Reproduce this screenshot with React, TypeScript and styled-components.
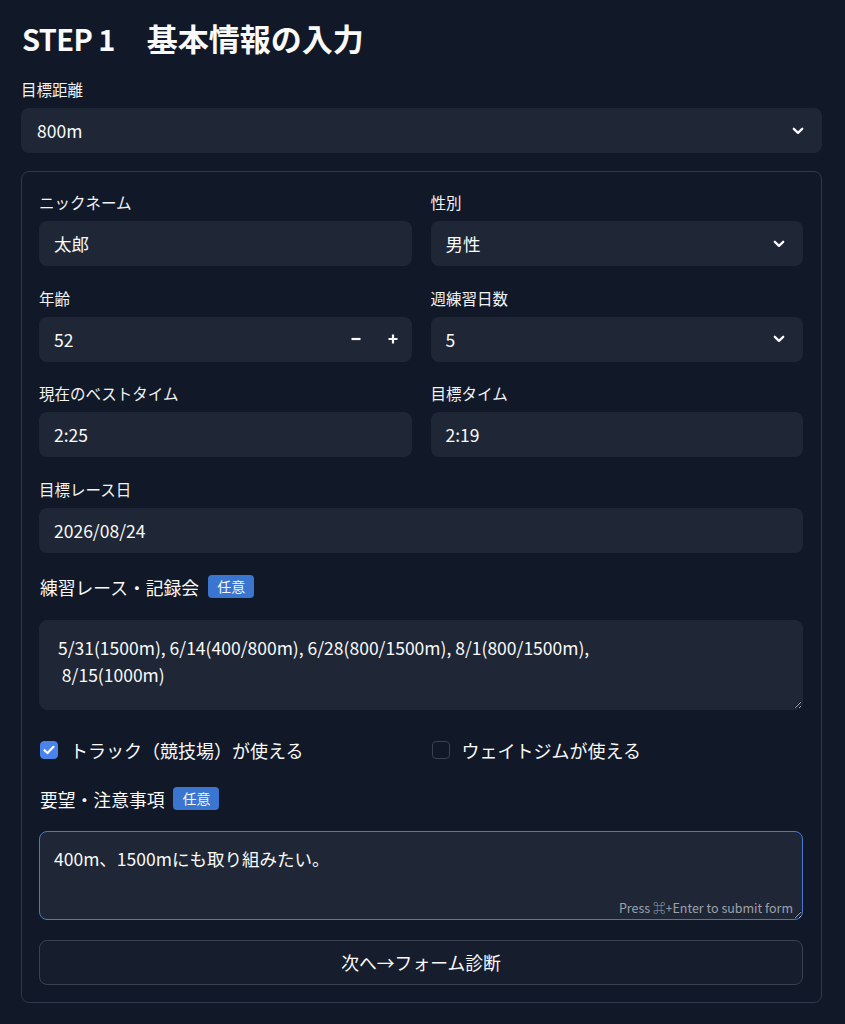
import styled, { createGlobalStyle } from 'styled-components';

const GlobalStyle = createGlobalStyle`
  body {
    margin: 0;
    background: #111827;
    color: #fafafa;
    font-family: "Noto Sans CJK JP", "Noto Sans", sans-serif;
  }
`;

const Page = styled.div`
  padding: 20px 23px 20px 21px;
`;

const Title = styled.h1`
  display: flex;
  align-items: baseline;
  gap: 32px;
  margin: 0 0 23px 1px;
  font-size: 31px;
  line-height: 36px;
  font-weight: 700;
`;

const Step = styled.span`
  font-size: 29px;
  letter-spacing: -0.6px;
`;

const Label = styled.div`
  font-size: 15.5px;
  line-height: 20px;
  margin-bottom: 9px;
  color: #f2f3f5;
`;

const Box = styled.div<{ $h?: number; $pad?: number }>`
  height: ${(p) => p.$h ?? 45}px;
  background: #1f2736;
  border-radius: 8px;
  display: flex;
  align-items: center;
  padding: 0 18px 0 ${(p) => p.$pad ?? 15}px;
  font-size: 17.5px;
  color: #fafafa;
  box-sizing: border-box;
`;

const Value = styled.span`
  flex: 1;
`;

const Form = styled.div`
  margin-top: 18px;
  border: 1px solid #30374a;
  border-radius: 8px;
  padding: 20px 18px 17px 17px;
`;

const Grid = styled.div`
  display: grid;
  grid-template-columns: 1fr 1fr;
  column-gap: 19px;
  row-gap: 21.5px;
`;

const Field = styled.div<{ $span?: boolean }>`
  grid-column: ${(p) => (p.$span ? '1 / -1' : 'auto')};
`;

const Heading = styled.div<{ $top: number; $bottom: number }>`
  display: flex;
  align-items: center;
  gap: 9px;
  font-size: 17.8px;
  line-height: 28px;
  margin: ${(p) => p.$top}px 0 ${(p) => p.$bottom}px 1px;
`;

const Badge = styled.span`
  background: #3a76cf;
  color: #f4f7fc;
  font-size: 14px;
  line-height: 23px;
  padding: 0 9px;
  border-radius: 4px;
`;

const AreaWrap = styled.div`
  position: relative;
`;

const Area = styled.textarea<{ $h: number; $focus?: boolean }>`
  display: block;
  width: 100%;
  height: ${(p) => p.$h}px;
  box-sizing: border-box;
  background: #1f2736;
  color: #fafafa;
  border: 1px solid ${(p) => (p.$focus ? '#4a78d0' : '#1f2736')};
  border-radius: 8px;
  padding: 13px 14px;
  font-family: "Noto Sans CJK JP", "Noto Sans", sans-serif;
  font-size: 17.5px;
  line-height: 27px;
  resize: vertical;
  outline: none;
`;

const Hint = styled.span`
  position: absolute;
  right: 10px;
  bottom: 3px;
  font-size: 12.5px;
  color: #9ca1ab;
  font-family: "Noto Sans CJK JP", "DejaVu Sans", sans-serif;
`;

const CheckRow = styled.div`
  display: grid;
  grid-template-columns: 1fr 1fr;
  column-gap: 19px;
  margin-top: 28px;
`;

const Check = styled.label`
  display: flex;
  align-items: center;
  gap: 12px;
  font-size: 18px;
  line-height: 24px;
  margin-left: 1px;
`;

const CheckBox = styled.span<{ $on?: boolean }>`
  width: 18px;
  height: 18px;
  box-sizing: border-box;
  border-radius: 4px;
  display: flex;
  align-items: center;
  justify-content: center;
  background: ${(p) => (p.$on ? '#4a84ea' : 'transparent')};
  border: 1px solid ${(p) => (p.$on ? '#4a84ea' : '#3a4253')};
`;

const Stepper = styled.span`
  display: flex;
  gap: 25px;
  align-items: center;
  margin-right: -5px;
`;

const SubmitButton = styled.button`
  display: block;
  width: 100%;
  height: 45px;
  margin-top: 20px;
  background: #161d2d;
  border: 1px solid #3a4152;
  border-radius: 8px;
  color: #fafafa;
  font-family: "Noto Sans CJK JP", "Noto Sans", sans-serif;
  font-size: 17.8px;
`;

function Chevron() {
  return (
    <svg width="12" height="8" viewBox="0 0 12 8">
      <path d="M1.8 1.8 L6 5.8 L10.2 1.8" fill="none" stroke="#fafafa" strokeWidth="2.3" strokeLinecap="round" strokeLinejoin="round" />
    </svg>
  );
}

function Tick() {
  return (
    <svg width="12" height="10" viewBox="0 0 12 10">
      <path d="M1.5 5.2 L4.5 8 L10.5 1.8" fill="none" stroke="#fff" strokeWidth="2.2" strokeLinecap="round" strokeLinejoin="round" />
    </svg>
  );
}

function Select({ value, pad }: { value: string; pad?: number }) {
  return (
    <Box $pad={pad}>
      <Value>{value}</Value>
      <Chevron />
    </Box>
  );
}

function App() {
  return (
    <Page>
      <GlobalStyle />
      <Title>
        <Step>STEP 1</Step>
        <span>基本情報の入力</span>
      </Title>
      <Label>目標距離</Label>
      <Select value="800m" pad={16} />

      <Form>
        <Grid>
          <Field>
            <Label>ニックネーム</Label>
            <Box>太郎</Box>
          </Field>
          <Field>
            <Label>性別</Label>
            <Select value="男性" />
          </Field>
          <Field>
            <Label>年齢</Label>
            <Box>
              <Value>52</Value>
              <Stepper>
                <svg width="12" height="12" viewBox="0 0 12 12">
                  <path d="M1.5 6 H10.5" stroke="#fafafa" strokeWidth="2.2" />
                </svg>
                <svg width="12" height="12" viewBox="0 0 12 12">
                  <path d="M1.5 6 H10.5 M6 1.5 V10.5" stroke="#fafafa" strokeWidth="2.2" />
                </svg>
              </Stepper>
            </Box>
          </Field>
          <Field>
            <Label>週練習日数</Label>
            <Select value="5" />
          </Field>
          <Field>
            <Label>現在のベストタイム</Label>
            <Box>2:25</Box>
          </Field>
          <Field>
            <Label>目標タイム</Label>
            <Box>2:19</Box>
          </Field>
          <Field $span>
            <Label>目標レース日</Label>
            <Box>2026/08/24</Box>
          </Field>
        </Grid>

        <Heading $top={20} $bottom={19}>
          練習レース・記録会<Badge>任意</Badge>
        </Heading>
        <AreaWrap>
          <Area
            $h={90}
            readOnly
            value={' 5/31(1500m), 6/14(400/800m), 6/28(800/1500m), 8/1(800/1500m),\n  8/15(1000m)'}
          />
        </AreaWrap>

        <CheckRow>
          <Check>
            <CheckBox $on>
              <Tick />
            </CheckBox>
            トラック（競技場）が使える
          </Check>
          <Check>
            <CheckBox />
            ウェイトジムが使える
          </Check>
        </CheckRow>

        <Heading $top={23} $bottom={18}>
          要望・注意事項<Badge>任意</Badge>
        </Heading>
        <AreaWrap>
          <Area $h={89} $focus readOnly value="400m、1500mにも取り組みたい。" />
          <Hint>Press ⌘+Enter to submit form</Hint>
        </AreaWrap>

        <SubmitButton>次へ→フォーム診断</SubmitButton>
      </Form>
    </Page>
  );
}

export default App;
